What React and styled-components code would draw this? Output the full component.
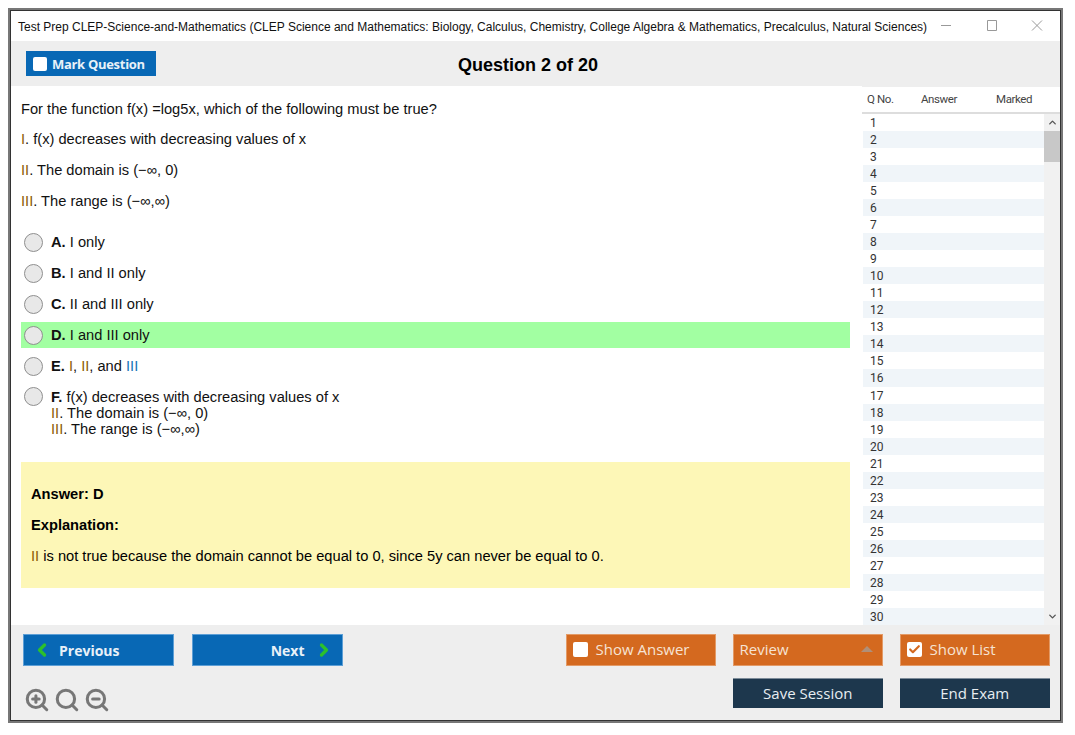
import styled, { createGlobalStyle } from "styled-components";
import { ChevronLeft, ChevronRight, ChevronUp, ChevronDown, Check, ZoomIn, ZoomOut, Search } from "lucide-react";

const GlobalStyle = createGlobalStyle`
  html, body {
    margin: 0;
    padding: 0;
    background: #fff;
  }
  * {
    box-sizing: border-box;
  }
`;

const Page = styled.div`
  padding: 8px 0 0 8px;
`;

const Window = styled.div`
  width: 1055px;
  height: 715px;
  border: 2px solid #777;
  outline: 1px solid #333;
  outline-offset: -3px;
  padding: 1px;
  display: flex;
  flex-direction: column;
  background: #fff;
  font-family: "Liberation Sans", Arial, sans-serif;
`;

const TitleBar = styled.div`
  height: 30px;
  flex: none;
  display: flex;
  align-items: center;
  padding: 1px 0 0 7px;
  background: #fff;
`;

const TitleText = styled.div`
  font-size: 12px;
  color: #111;
  white-space: nowrap;
`;

const WindowControls = styled.div`
  display: flex;
  gap: 33.5px;
  margin: -1px 0 0 13px;
  svg {
    display: block;
  }
`;

const Toolbar = styled.div`
  height: 45px;
  flex: none;
  display: grid;
  grid-template-columns: 1fr auto 1fr;
  align-items: center;
  padding: 0 30px 0 15px;
  background: #eee;
`;

const MarkButton = styled.div`
  justify-self: start;
  width: 130px;
  height: 25px;
  display: flex;
  align-items: center;
  gap: 5px;
  padding-left: 7px;
  background: #0868b5;
  color: #e8f1f8;
  font: 700 13px "Open Sans", sans-serif;
  letter-spacing: -0.3px;
`;

const CheckBox = styled.span`
  width: ${props => props.$size}px;
  height: ${props => props.$size}px;
  flex: none;
  display: flex;
  align-items: center;
  justify-content: center;
  background: #fff;
  border-radius: 2px;
`;

const QuestionTitle = styled.div`
  font-size: 18px;
  font-weight: 700;
  color: #000;
  margin-top: 3px;
`;

const Main = styled.div`
  flex: 1;
  min-height: 0;
  display: flex;
  background: #fff;
`;

const QuestionPane = styled.div`
  width: 851px;
  flex: none;
  padding: 8px 0 0 10px;
  font-size: 14.67px;
  color: #111;
`;

const Paragraph = styled.div`
  height: ${props => (props.$lead ? "30px" : "31px")};
  line-height: 31px;
  white-space: nowrap;
`;

const Num = styled.span`
  color: ${props => (props.$blue ? "#1273b8" : "#8a5a00")};
`;

const OptionList = styled.div`
  margin-top: 12px;
  width: 829px;
  display: flex;
  flex-direction: column;
  gap: 5px;
`;

const OptionRow = styled.div`
  height: 26px;
  display: flex;
  align-items: center;
  gap: 8px;
  padding-left: 3px;
  background: ${props => (props.$correct ? "#a2ffa2" : "transparent")};
`;

const LongOption = styled.div`
  display: flex;
  gap: 8px;
  padding: 3px 0 0 3px;
`;

const LongText = styled.div`
  line-height: 16px;
  padding-top: 2px;
`;

const Radio = styled.span`
  width: 19px;
  height: 19px;
  flex: none;
  border-radius: 50%;
  background: #e8e8e8;
  border: 1px solid #8f8f8f;
`;

const AnswerBox = styled.div`
  margin-top: 25px;
  width: 829px;
  height: 126px;
  padding: 17px 10px;
  background: #fdf7b7;
  color: #000;
`;

const ListPane = styled.div`
  flex: 1;
  min-width: 0;
  display: flex;
  flex-direction: column;
  border-top: 1px solid #eee;
  background: #eee;
`;

const ListHeader = styled.div`
  height: 27px;
  flex: none;
  display: grid;
  grid-template-columns: 54px 75px 1fr;
  align-items: center;
  padding: 0 0 2px 5px;
  background: #fff;
  border-bottom: 2px solid #ddd;
  font: 11.5px Roboto, sans-serif;
  color: #444;
  letter-spacing: -0.4px;
`;

const ListBody = styled.div`
  flex: 1;
  min-height: 0;
  display: flex;
  overflow: hidden;
`;

const ListRows = styled.div`
  width: 182px;
  flex: none;
  padding-left: 1px;
  background: #fff;
`;

const ListRow = styled.div`
  height: 17.04px;
  padding-left: 7px;
  font: 12px/19px Roboto, sans-serif;
  color: #333;
  &:nth-child(even) {
    background: #f0f5f9;
  }
`;

const Scrollbar = styled.div`
  flex: 1;
  display: flex;
  flex-direction: column;
  background: #f1f1f1;
`;

const ScrollArrow = styled.div`
  height: 17px;
  flex: none;
  margin-top: ${props => (props.$bottom ? "auto" : "0")};
  display: flex;
  align-items: center;
  justify-content: center;
  color: #555;
`;

const ScrollThumb = styled.div`
  height: 31px;
  background: #c8c8c8;
`;

const Footer = styled.div`
  height: 95px;
  flex: none;
  display: flex;
  flex-direction: column;
  gap: 12px;
  padding: 9px 10px 0 12px;
  background: #eee;
`;

const FooterRow = styled.div`
  display: flex;
  align-items: flex-start;
  justify-content: space-between;
`;

const NavGroup = styled.div`
  display: flex;
  gap: 18.5px;
`;

const ActionGroup = styled.div`
  display: flex;
  gap: 16.5px;
`;

const ZoomGroup = styled.div`
  display: flex;
  gap: 4px;
  margin-top: 9px;
  padding-left: 1px;
  svg {
    display: block;
  }
`;

const NavButton = styled.div`
  width: 150.5px;
  height: 32px;
  display: flex;
  align-items: center;
  justify-content: ${props => (props.$start ? "flex-start" : "flex-end")};
  gap: ${props => (props.$start ? "7px" : "9px")};
  padding: 0 ${props => (props.$start ? "0" : "8px")} 0 ${props => (props.$start ? "8px" : "0")};
  background: #0868b5;
  border: 1px solid #5d9fd6;
  color: #e8f1f8;
  font: 700 14px "Open Sans", sans-serif;
`;

const OrangeButton = styled.div`
  width: 150.5px;
  height: 32px;
  display: flex;
  align-items: center;
  gap: 8px;
  padding: 0 6px 2px;
  background: #d4691f;
  border: 1px solid #e39a66;
  color: #f6e3d4;
  font: 400 15px "Open Sans", sans-serif;
`;

const Caret = styled.span`
  margin-left: auto;
  margin-right: 3px;
  width: 0;
  height: 0;
  border-left: 6px solid transparent;
  border-right: 6px solid transparent;
  border-bottom: 6px solid #b08f78;
`;

const DarkButton = styled.div`
  width: 150.5px;
  height: 30px;
  display: flex;
  align-items: center;
  justify-content: center;
  padding-bottom: 1px;
  background: #1d374d;
  border-top: 1px solid #7d8c99;
  color: #e8edf1;
  font: 400 15px "Open Sans", sans-serif;
`;

const options = [
  { letter: "A.", text: <>I only</> },
  { letter: "B.", text: <>I and II only</> },
  { letter: "C.", text: <>II and III only</> },
  { letter: "D.", text: <>I and III only</>, correct: true },
  { letter: "E.", text: <><Num>I</Num>, <Num>II</Num>, and <Num $blue>III</Num></> },
];

const rows = Array.from({ length: 30 }, (_, i) => i + 1);

const App = () => {
  return (
    <>
      <GlobalStyle />
      <Page>
        <Window>
          <TitleBar>
            <TitleText>
              Test Prep CLEP-Science-and-Mathematics (CLEP Science and Mathematics: Biology, Calculus, Chemistry, College Algebra &amp; Mathematics, Precalculus, Natural Sciences)
            </TitleText>
            <WindowControls>
              <svg width="12" height="12" viewBox="0 0 12 12"><path d="M1 5.5h10" stroke="#999" fill="none" /></svg>
              <svg width="12" height="12" viewBox="0 0 12 12"><path d="M1.5 .5h9v10h-9z" stroke="#999" fill="none" /></svg>
              <svg width="12" height="12" viewBox="0 0 12 12"><path d="M1 .5l10 10M11 .5l-10 10" stroke="#999" fill="none" /></svg>
            </WindowControls>
          </TitleBar>
          <Toolbar>
            <MarkButton>
              <CheckBox $size={14} />
              Mark Question
            </MarkButton>
            <QuestionTitle>Question 2 of 20</QuestionTitle>
          </Toolbar>
          <Main>
            <QuestionPane>
              <Paragraph $lead>For the function f(x) =log5x, which of the following must be true?</Paragraph>
              <Paragraph><Num>I</Num>. f(x) decreases with decreasing values of x</Paragraph>
              <Paragraph><Num>II</Num>. The domain is (−∞, 0)</Paragraph>
              <Paragraph><Num>III</Num>. The range is (−∞,∞)</Paragraph>
              <OptionList>
                {options.map(option => (
                  <OptionRow key={option.letter} $correct={option.correct}>
                    <Radio />
                    <span><b>{option.letter}</b> {option.text}</span>
                  </OptionRow>
                ))}
                <LongOption>
                  <Radio />
                  <LongText>
                    <div><b>F.</b> f(x) decreases with decreasing values of x</div>
                    <div><Num>II</Num>. The domain is (−∞, 0)</div>
                    <div><Num>III</Num>. The range is (−∞,∞)</div>
                  </LongText>
                </LongOption>
              </OptionList>
              <AnswerBox>
                <Paragraph><b>Answer: D</b></Paragraph>
                <Paragraph><b>Explanation:</b></Paragraph>
                <Paragraph><Num>II</Num> is not true because the domain cannot be equal to 0, since 5y can never be equal to 0.</Paragraph>
              </AnswerBox>
            </QuestionPane>
            <ListPane>
              <ListHeader>
                <span>Q No.</span>
                <span>Answer</span>
                <span>Marked</span>
              </ListHeader>
              <ListBody>
                <ListRows>
                  {rows.map(n => <ListRow key={n}>{n}</ListRow>)}
                </ListRows>
                <Scrollbar>
                  <ScrollArrow><ChevronUp size={11} strokeWidth={3} /></ScrollArrow>
                  <ScrollThumb />
                  <ScrollArrow $bottom><ChevronDown size={11} strokeWidth={3} /></ScrollArrow>
                </Scrollbar>
              </ListBody>
            </ListPane>
          </Main>
          <Footer>
            <FooterRow>
              <NavGroup>
                <NavButton $start>
                  <ChevronLeft size={20} strokeWidth={4} color="#2cc02c" />
                  Previous
                </NavButton>
                <NavButton>
                  Next
                  <ChevronRight size={20} strokeWidth={4} color="#2cc02c" />
                </NavButton>
              </NavGroup>
              <ActionGroup>
                <OrangeButton>
                  <CheckBox $size={15} />
                  Show Answer
                </OrangeButton>
                <OrangeButton>
                  Review
                  <Caret />
                </OrangeButton>
                <OrangeButton>
                  <CheckBox $size={15}><Check size={13} strokeWidth={4} color="#d4691f" /></CheckBox>
                  Show List
                </OrangeButton>
              </ActionGroup>
            </FooterRow>
            <FooterRow>
              <ZoomGroup>
                <ZoomIn size={26} strokeWidth={2.8} color="#777" />
                <Search size={26} strokeWidth={2.8} color="#777" />
                <ZoomOut size={26} strokeWidth={2.8} color="#777" />
              </ZoomGroup>
              <ActionGroup>
                <DarkButton>Save Session</DarkButton>
                <DarkButton>End Exam</DarkButton>
              </ActionGroup>
            </FooterRow>
          </Footer>
        </Window>
      </Page>
    </>
  );
};

export default App;
